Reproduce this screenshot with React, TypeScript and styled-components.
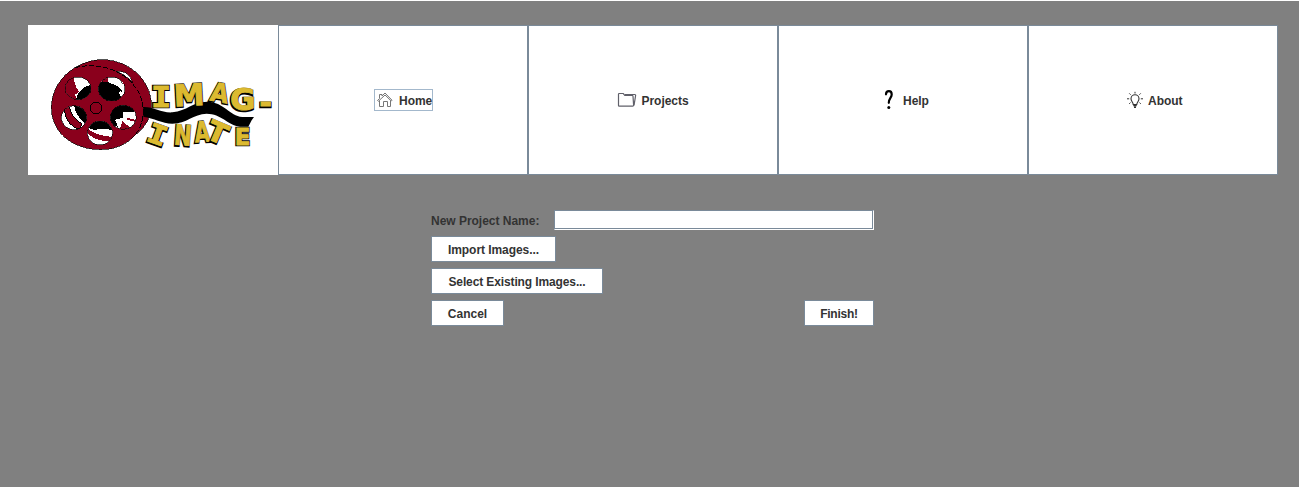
import React from "react";
import styled, { createGlobalStyle } from "styled-components";

const GlobalStyle = createGlobalStyle`
  * { box-sizing: border-box; }
  body { margin: 0; background: #808080; }
`;

const Page = styled.div`
  height: 487px;
  padding: 24px 21px 0 28px;
  border-top: 1px solid #fff;
  background: #808080;
  font: bold 12px/14px "Liberation Sans", Arial, sans-serif;
  color: #333;
`;

const Nav = styled.nav`
  display: grid;
  grid-template-columns: repeat(5, 250px);
  height: 150px;
`;

const LogoPanel = styled.div`
  background: #fff;
  svg { display: block; }
`;

const NavButton = styled.button`
  display: flex;
  align-items: center;
  justify-content: center;
  padding: 0;
  border: 1px solid #7a8a99;
  background: #fff;
  font: inherit;
  color: inherit;
`;

const NavLabel = styled.span<{ $focused?: boolean }>`
  display: flex;
  align-items: center;
  gap: ${(p) => (p.$focused ? 5 : 4)}px;
  height: 22px;
  padding: 0 ${(p) => (p.$focused ? 0 : 1)}px 0 1px;
  border: 1px solid ${(p) => (p.$focused ? "#a3b8cc" : "transparent")};
  svg { display: block; flex: none; }
`;

const Caption = styled.span<{ $width: number }>`
  width: ${(p) => p.$width}px;
  padding-top: 2px;
  text-indent: 0.5px;
  letter-spacing: -0.03px;
  white-space: nowrap;
  text-align: left;
`;

const Form = styled.form`
  display: flex;
  flex-direction: column;
  align-items: flex-start;
  gap: 6px;
  width: 443px;
  margin: 35px 0 0 403px;
`;

const FormRow = styled.div`
  display: flex;
  align-items: center;
  justify-content: space-between;
  width: 100%;
`;

const FieldLabel = styled.label`
  padding-top: 2px;
  letter-spacing: -0.02px;
  white-space: nowrap;
`;

const TextField = styled.input`
  width: 320px;
  height: 20px;
  padding: 0 3px;
  border: 1px solid;
  border-color: #7a8a99 #fff #fff #7a8a99;
  border-radius: 0;
  box-shadow: inset -1px -1px #7a8a99;
  background: #fff;
  font: inherit;
  outline: none;
`;

const PushButton = styled.button<{ $width: number; $spacing?: number }>`
  display: flex;
  align-items: center;
  justify-content: center;
  width: ${(p) => p.$width}px;
  height: 26px;
  padding: 1px 0 0;
  border: 1px solid #7a8a99;
  background: #fff;
  font: inherit;
  letter-spacing: ${(p) => p.$spacing ?? 0}px;
  color: inherit;
  white-space: nowrap;
`;

const HomeIcon = () => (
  <svg width="18" height="18" viewBox="0 0 18 18" fill="none" stroke="#777" strokeWidth="1">
    <path d="M1.5 9.5 3.5 7.5V3.5H6V5L9 2 16 9.2 15.2 10 9 4 2.3 10.3Z" />
    <path d="M3.5 9.5V15.5H7.5V10.5H11.5V15.5H14.5V9.5" />
  </svg>
);

const FolderIcon = () => (
  <svg width="20" height="18" viewBox="0 0 20 18" fill="none" stroke="#60606a" strokeWidth="1.2">
    <path d="M15.7 15.2H2.2Q1.5 15.2 1.5 14.5V3.2Q1.5 2.5 2.2 2.5H6.3L7.8 4.3H15.2Q16 4.3 16 5.2L16.6 14Q16.6 15.2 15.7 15.2Z" />
    <path d="M8 3.5H17.7Q18.8 3.5 18.6 4.7L17 14.5" />
  </svg>
);

const HelpIcon = () => (
  <svg width="20" height="20" viewBox="0 0 20 20" fill="none" stroke="#000" strokeLinecap="round">
    <path d="M7 4.3C7.2.1 12.7.2 12.7 4.4 12.7 7.7 9.8 8.2 9.8 12.8" strokeWidth="2.2" />
    <circle cx="9.8" cy="17.5" r="1.5" fill="#000" stroke="none" />
  </svg>
);

const BulbIcon = () => (
  <svg width="18" height="18" viewBox="0 0 18 18" fill="none" stroke="#333">
    <path d="M7.2 13.5C7 11 5 10.3 5 7.7A4 4 0 0 1 13 7.7C13 10.3 11 11 10.8 13.5Z" strokeWidth="1.1" />
    <path d="M7.3 14.5H10.7M8 16.2H10" strokeWidth="1.6" />
    <path d="M9 .8V2.5M3.3 2.4 4.6 3.7M14.7 2.4 13.4 3.7M1 7.8H3.2M14.8 7.8H17M3.2 12.8 4.5 11.6M14.8 12.8 13.5 11.6" />
  </svg>
);

type LetterProps = { ch: string; x: number; y: number; sx?: number; size?: number; rotate?: number; slab?: boolean };

const Letter = ({ ch, x, y, sx = 1, size = 29, rotate = 0, slab }: LetterProps) => {
  const family = slab ? "DejaVu Sans Mono" : "DejaVu Sans";
  const place = `rotate(${rotate}) scale(${sx} 1)`;
  return (
    <g fontFamily={family} fontSize={size} textAnchor="middle" transform={`translate(${x} ${y})`}>
      <text transform={`translate(-.2 .3) ${place}`} fill="#000" stroke="#000" strokeWidth="2.7">{ch}</text>
      <text transform={`translate(.2 -.3) ${place}`} fill="#dcba30" stroke="#dcba30" strokeWidth="0.9">{ch}</text>
    </g>
  );
};

const holes = [
  { id: "nw", cx: 114, cy: 115, rx: 39, ry: 34 },
  { id: "ne", cx: 215, cy: 117, rx: 40, ry: 36 },
  { id: "w", cx: 102, cy: 203, rx: 38, ry: 36 },
  { id: "e", cx: 250, cy: 202, rx: 39, ry: 36 },
  { id: "s", cx: 180, cy: 249, rx: 38, ry: 36 },
];

const Logo = () => (
  <svg width="250" height="150" viewBox="28 25 250 150" role="img" aria-label="Imag-inate">
    <g transform="translate(40 50) scale(.33333)" shapeRendering="crispEdges">
      <defs>
        {holes.map((h) => (
          <clipPath id={h.id} key={h.id}>
            <ellipse cx={h.cx} cy={h.cy} rx={h.rx} ry={h.ry} />
          </clipPath>
        ))}
      </defs>
      <path
        d="M34 173C34 125 62 78 105 53 137 34 165 29 190 29 268 31 334 91 334 165 334 204 315 232 286 255 262 283 225 299 182 299 100 299 34 249 34 173Z"
        fill="#8a001c" stroke="#000" strokeWidth="2"
      />
      <path d="M105 53C180 35 248 60 287 113 321 160 314 219 286 255" fill="none" stroke="#000" strokeWidth="3" strokeDasharray="16 5" />
      <path d="M231 64Q266 60 279 98Q257 75 231 64Z" fill="#fff" stroke="#000" strokeWidth="2" />
      {holes.map((h) => (
        <ellipse key={h.id} cx={h.cx} cy={h.cy} rx={h.rx} ry={h.ry} fill="#fff" />
      ))}
      <g clipPath="url(#nw)">
        <path d="M70 75H103Q99 102 117 124L105 135 115 155H70Z" fill="#8a001c" />
        <path d="M107 151Q117 108 160 104V155H105Z" />
      </g>
      <g clipPath="url(#ne)">
        <path d="M170 76H204V104L170 110Z" fill="#8a001c" />
        <path d="M170 96Q200 92 224 104 244 113 248 126 225 118 250 150L205 158 170 140Z" />
      </g>
      <g clipPath="url(#w)">
        <path d="M74 165 88 170Q92 201 126 222L118 238Q81 228 74 185Z" fill="#8a001c" stroke="#000" strokeWidth="3" />
        <path d="M102 165Q107 202 143 225V165Z" />
      </g>
      <g clipPath="url(#e)">
        <path d="M240 236 247 214 268 230 276 240H240Z" fill="#8a001c" />
        <path d="M208 200Q210 165 252 165 278 169 292 184L250 186V203L225 209 234 230 208 225Z" />
        <path d="M262 206 290 214" stroke="#8a001c" strokeWidth="6" />
      </g>
      <g clipPath="url(#s)">
        <path d="M140 210H220V242Q190 232 164 240L140 232Z" />
        <path d="M140 233Q165 257 218 261V273H195Q161 269 140 248Z" fill="#8a001c" />
      </g>
      {holes.map((h) => (
        <ellipse key={h.id} cx={h.cx} cy={h.cy} rx={h.rx} ry={h.ry} fill="none" stroke="#000" strokeWidth="2" />
      ))}
      <circle cx="168" cy="174" r="17" fill="none" stroke="#000" strokeWidth="3" />
    </g>
    <path
      transform="translate(140 70) scale(.33333)"
      d="M10 111C42 110 63 129 97 127 142 122 157 96 202 95 252 96 268 137 307 141L342 141 335 151 325 170H300C262 165 244 131 200 131 160 132 140 161 97 161 65 160 43 145 10 140Z"
    />
    <Letter ch="I" x={161} y={107} slab size={28} sx={1.2} />
    <Letter ch="M" x={189.5} y={106} size={30} sx={1.03} rotate={-3} />
    <Letter ch="A" x={218} y={102} size={26} sx={0.9} rotate={10} />
    <Letter ch="G" x={242.5} y={110.5} size={31} sx={1} />
    <Letter ch="-" x={265.5} y={112.5} size={28} sx={1.1} />
    <Letter ch="I" x={154} y={144} slab size={27} sx={1.2} rotate={20} />
    <Letter ch="N" x={182} y={145.5} size={28} sx={0.75} rotate={4} />
    <Letter ch="A" x={202.5} y={142} size={28} sx={0.7} rotate={-4} />
    <Letter ch="T" x={213.5} y={142} size={28} sx={1.05} rotate={23} />
    <Letter ch="E" x={242.5} y={145} size={23} sx={1} />
  </svg>
);

export default function App() {
  return (
    <>
      <GlobalStyle />
      <Page>
        <Nav>
          <LogoPanel><Logo /></LogoPanel>
          <NavButton><NavLabel $focused><HomeIcon /><Caption $width={33}>Home</Caption></NavLabel></NavButton>
          <NavButton><NavLabel><FolderIcon /><Caption $width={48}>Projects</Caption></NavLabel></NavButton>
          <NavButton><NavLabel><HelpIcon /><Caption $width={25}>Help</Caption></NavLabel></NavButton>
          <NavButton><NavLabel><BulbIcon /><Caption $width={33}>About</Caption></NavLabel></NavButton>
        </Nav>
        <Form onSubmit={(e) => e.preventDefault()}>
          <FormRow>
            <FieldLabel htmlFor="project-name">New Project Name:</FieldLabel>
            <TextField id="project-name" />
          </FormRow>
          <PushButton type="button" $width={125} $spacing={-0.06}>Import Images...</PushButton>
          <PushButton type="button" $width={172} $spacing={-0.12}>Select Existing Images...</PushButton>
          <FormRow>
            <PushButton type="button" $width={73}>Cancel</PushButton>
            <PushButton type="submit" $width={70} $spacing={-0.25}>Finish!</PushButton>
          </FormRow>
        </Form>
      </Page>
    </>
  );
}
